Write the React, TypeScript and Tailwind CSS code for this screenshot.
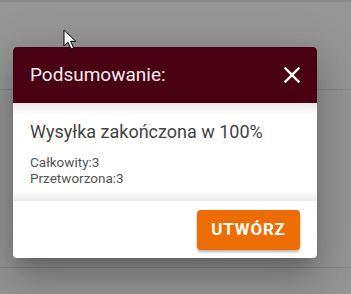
function Cursor() {
  return (
    <svg className="absolute left-[63px] top-[29px]" width="14" height="22" viewBox="0 0 14 22">
      <path
        d="M1 1 L1 17 L5 13.2 L8 20 L10.6 18.9 L7.7 12.3 L12.8 12.3 Z"
        fill="#fff"
        stroke="#000"
        strokeWidth="1"
        strokeLinejoin="miter"
      />
    </svg>
  );
}

export default function App() {
  return (
    <div className="relative h-[294px] w-[351px] overflow-hidden bg-[#969696] font-['Roboto',sans-serif]">
      {/* page behind the overlay */}
      <div className="absolute inset-x-0 top-0 h-[2px] bg-[#8a8a8a]" />
      <div className="absolute inset-x-0 top-[89px] h-px bg-[#858585]" />
      <div className="absolute inset-x-0 top-[267px] h-px bg-[#858585]" />

      <div className="absolute left-[13px] top-[47px] flex w-[304px] flex-col overflow-hidden rounded-[4px] bg-white shadow-[0_11px_15px_-7px_rgba(0,0,0,0.2),0_24px_38px_3px_rgba(0,0,0,0.14),0_9px_46px_8px_rgba(0,0,0,0.12)]">
        <header className="flex h-[56px] items-center justify-between bg-[#480012] pl-[17px] pr-[11px]">
          <h2 className="text-[19px] font-normal text-[#f4eef0]">Podsumowanie:</h2>
          <svg width="28" height="28" viewBox="0 0 24 24" fill="#fff">
            <path d="M19 6.41 17.59 5 12 10.59 6.41 5 5 6.41 10.59 12 5 17.59 6.41 19 12 13.41 17.59 19 19 17.59 13.41 12z" />
          </svg>
        </header>

        <div className="relative h-[98px] px-[17px] pt-[17px]">
          <div className="absolute inset-x-0 top-0 h-[12px] bg-gradient-to-b from-[rgba(0,0,0,0.09)] to-transparent" />
          <div className="absolute inset-x-0 bottom-0 h-[10px] bg-gradient-to-t from-[rgba(0,0,0,0.08)] to-transparent" />
          <p className="text-[18px] leading-[24px] text-[#444]">Wysyłka zakończona w 100%</p>
          <div className="mt-[10px] text-[13.5px] leading-[16px] text-[#555]">
            <div>Całkowity:3</div>
            <div>Przetworzona:3</div>
          </div>
        </div>

        <footer className="flex h-[57px] items-start justify-end pr-[17px] pt-[9px]">
          <button className="h-[40px] w-[103px] rounded-[4px] bg-[#ef6c00] text-[17px] font-bold tracking-[0.8px] text-white shadow-[0_2px_3px_rgba(0,0,0,0.3)]">
            UTWÓRZ
          </button>
        </footer>
      </div>

      <Cursor />
    </div>
  );
}
